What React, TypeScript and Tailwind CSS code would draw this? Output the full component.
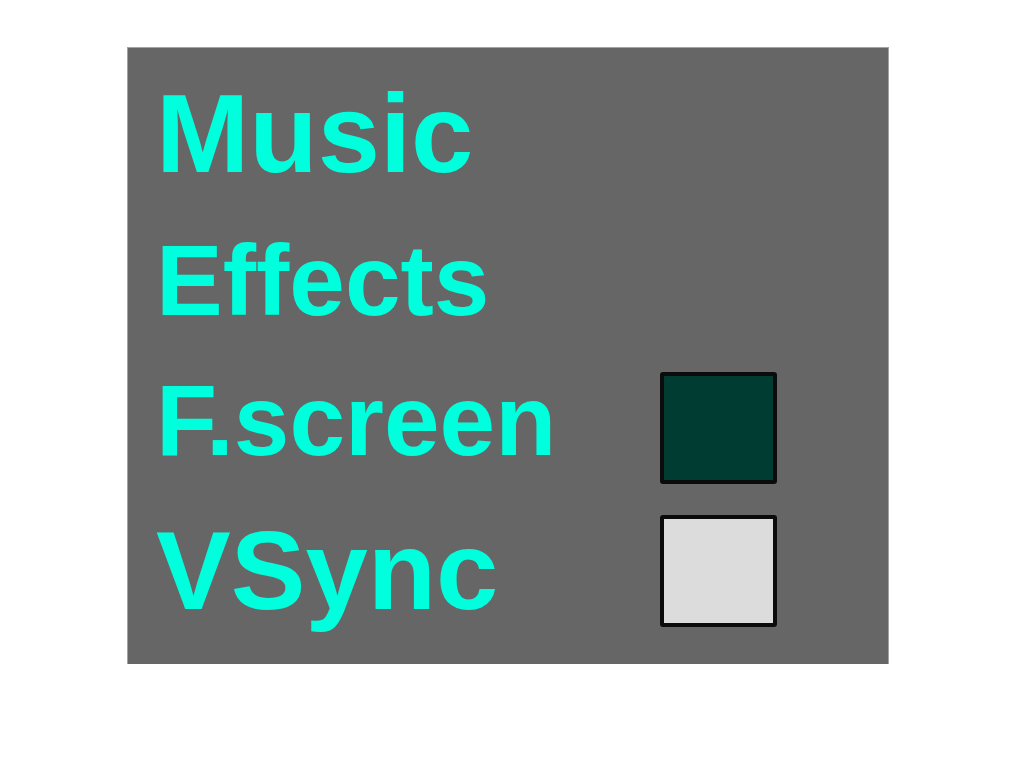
import { useState } from "react";

type ToggleProps = {
  id: string;
  label: string;
  textClass: string;
  defaultChecked?: boolean;
};

function Toggle({ id, label, textClass, defaultChecked = false }: ToggleProps) {
  const [checked, setChecked] = useState(defaultChecked);
  return (
    <div className="flex items-start justify-between">
      <label htmlFor={id} className={textClass}>
        {label}
      </label>
      <input
        id={id}
        type="checkbox"
        checked={checked}
        onChange={(event) => setChecked(event.target.checked)}
        className="h-28 w-[117px] shrink-0 cursor-pointer appearance-none rounded-[3px] border-4 border-[#0b0b0b] bg-[#dcdcdc] checked:bg-[#003c32]"
      />
    </div>
  );
}

const large = "text-[112px] leading-[112px]";
const medium = "text-[100px] leading-[96px]";

export default function App() {
  return (
    <main className="min-h-screen bg-white pt-[47px] pr-[135px] pb-12 pl-[127px]">
      <section
        aria-label="Settings"
        className="flex flex-col border-x border-t border-[#a3a3a3] bg-[#666666] pt-[30px] pr-[111px] pb-[37px] pl-7 font-['Liberation_Sans',Arial,sans-serif] font-bold text-[#00ffdc]"
      >
        <h2 className={large}>Music</h2>
        <h2 className={`${medium} mt-[42px] mb-11`}>Effects</h2>
        <div className="flex flex-col gap-[31px]">
          <Toggle id="fullscreen" label="F.screen" textClass={medium} defaultChecked />
          <Toggle id="vsync" label="VSync" textClass={large} />
        </div>
      </section>
    </main>
  );
}
